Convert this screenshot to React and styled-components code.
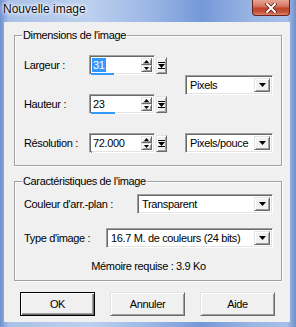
import React from 'react';
import styled, { createGlobalStyle } from 'styled-components';

const Global = createGlobalStyle`
  html, body { margin: 0; padding: 0; background: #fff; }
  body { font-family: "Liberation Sans", Arial, sans-serif; }
`;

const Window = styled.div`
  width: 296px;
  height: 327px;
  box-sizing: border-box;
  display: flex;
  flex-direction: column;
  background: linear-gradient(90deg, #6f8fd0 0%, #a9c1e8 3%, #bcd0ee 30%, #9db8e6 50%, #7498d8 68%, #9ab5e4 85%, #a7c0e9 97%, #6f8fc9 100%);
  overflow: hidden;
`;

const TitleBar = styled.div`
  height: 22px;
  flex: none;
  display: flex;
  align-items: flex-start;
  justify-content: space-between;
`;

const Title = styled.span`
  font-size: 12px;
  line-height: 18px;
  margin-left: 3px;
  color: #101010;
  text-shadow: 0 0 6px #fff, 0 0 4px #fff, 0 0 2px #fff;
`;

const CloseButton = styled.div`
  width: 38px;
  height: 16px;
  margin-right: 6px;
  box-sizing: border-box;
  border: 1px solid #6a231a;
  border-top: none;
  border-radius: 0 0 4px 4px;
  background: linear-gradient(180deg, #e6a595 0%, #d67a66 40%, #c2452d 55%, #c5523a 80%, #d98a6e 100%);
  display: flex;
  align-items: center;
  justify-content: center;
`;

const Client = styled.div`
  flex: 1;
  margin: 0 6px 5px 4px;
  background: #f0f0f0;
  display: flex;
  flex-direction: column;
  padding: 0 8px 0 10px;
  font-size: 11px;
  letter-spacing: -0.35px;
  color: #000;
`;

const Group = styled.div`
  position: relative;
  margin-top: ${p => p.$top}px;
  border: 1px solid #a0a0a0;
  box-shadow: inset 1px 1px 0 #fff, 1px 1px 0 #fff;
  padding: ${p => p.$pad};
`;

const GroupTitle = styled.span`
  position: absolute;
  top: -7px;
  left: 7px;
  padding: 0 1px;
  line-height: 13px;
  background: #f0f0f0;
`;

const DimGrid = styled.div`
  display: grid;
  grid-template-columns: 65px 78px 1fr 88px;
  grid-template-rows: 20px 20px 20px;
  row-gap: 19px;
  align-items: center;
`;

const Label = styled.span`
  line-height: 13px;
  white-space: nowrap;
  grid-column: 1;
  grid-row: ${p => p.$row || 'auto'};
`;

const SpinField = styled.div`
  display: flex;
  align-items: center;
  gap: 1px;
  grid-column: 2;
  grid-row: ${p => p.$row};
`;

const sunken = `
  box-sizing: border-box;
  background: #fff;
  border: 1px solid;
  border-color: #a0a0a0 #fff #fff #a0a0a0;
  box-shadow: inset 1px 1px 0 #696969, inset -1px -1px 0 #e3e3e3;
`;

const raised = `
  box-sizing: border-box;
  background: #f0f0f0;
  border: 1px solid;
  border-color: #e3e3e3 #696969 #696969 #e3e3e3;
  box-shadow: inset 1px 1px 0 #fff, inset -1px -1px 0 #a0a0a0;
`;

const EditBox = styled.div`
  ${sunken}
  position: relative;
  width: 66px;
  height: 20px;
  display: flex;
  align-items: stretch;
  padding: 2px 2px 2px 2px;
`;

const EditText = styled.div`
  flex: 1;
  display: flex;
  align-items: center;
  line-height: 14px;
  padding-left: 1px;
`;

const Selected = styled.span`
  background: #3399ff;
  color: #fff;
  padding: 0 1px;
  margin-left: -1px;
`;

const ValueBar = styled.div`
  position: absolute;
  left: 1px;
  bottom: -1px;
  height: 2px;
  background: #3399ff;
`;

const Spinner = styled.div`
  width: 11px;
  display: flex;
  flex-direction: column;
`;

const SpinBtn = styled.div`
  ${raised}
  flex: 1;
  display: flex;
  align-items: center;
  justify-content: center;
`;

const SliderBtn = styled.div`
  ${raised}
  width: 11px;
  height: 17px;
  display: flex;
  align-items: center;
  justify-content: center;
`;

const Combo = styled.div`
  ${sunken}
  width: ${p => p.$w}px;
  height: 20px;
  display: flex;
  align-items: stretch;
  padding: 2px;
  grid-column: ${p => p.$col || 'auto'};
  grid-row: ${p => p.$row || 'auto'};
  align-self: center;
`;

const ComboText = styled.div`
  flex: 1;
  display: flex;
  align-items: center;
  padding-left: 2px;
  white-space: nowrap;
  overflow: hidden;
`;

const DropBtn = styled.div`
  ${raised}
  width: 16px;
  display: flex;
  align-items: center;
  justify-content: center;
`;

const Row = styled.div`
  display: flex;
  align-items: center;
  justify-content: space-between;
  height: 20px;
  margin-top: ${p => p.$top || 0}px;
`;

const Memo = styled.div`
  margin-top: 12px;
  text-align: center;
  line-height: 13px;
`;

const ButtonRow = styled.div`
  display: flex;
  gap: 15px;
  margin-top: 11px;
  padding-left: 6px;
`;

const DialogButton = styled.div`
  ${raised}
  width: 75px;
  height: 24px;
  display: flex;
  align-items: center;
  justify-content: center;
  ${p => p.$default && `
    border: 1px solid #000;
    box-shadow: inset 1px 1px 0 #fff, inset -1px -1px 0 #696969, inset -2px -2px 0 #a0a0a0;
  `}
`;

const Up = () => (
  <svg width="5" height="3" viewBox="0 0 5 3"><path d="M2.5 0 L5 3 L0 3 Z" fill="#000" /></svg>
);
const Down = () => (
  <svg width="5" height="3" viewBox="0 0 5 3"><path d="M0 0 L5 0 L2.5 3 Z" fill="#000" /></svg>
);
const Tri = () => (
  <svg width="7" height="4" viewBox="0 0 7 4"><path d="M0 0 L7 0 L3.5 4 Z" fill="#000" /></svg>
);
const SliderGlyph = () => (
  <svg width="7" height="7" viewBox="0 0 7 7">
    <rect x="0" y="0" width="7" height="1" fill="#000" />
    <path d="M0 2 L7 2 L3.5 6 Z" fill="#000" />
    <rect x="0" y="6" width="7" height="1" fill="#000" />
  </svg>
);

const Spin = ({ children, bar, row }) => (
  <SpinField $row={row}>
    <EditBox>
      <EditText>{children}</EditText>
      <Spinner>
        <SpinBtn><Up /></SpinBtn>
        <SpinBtn><Down /></SpinBtn>
      </Spinner>
      <ValueBar style={{ width: bar + 'px' }} />
    </EditBox>
    <SliderBtn><SliderGlyph /></SliderBtn>
  </SpinField>
);

const Select = ({ w, children, col, row }) => (
  <Combo $w={w} $col={col} $row={row}>
    <ComboText>{children}</ComboText>
    <DropBtn><Tri /></DropBtn>
  </Combo>
);

export default function App() {
  return (
    <>
      <Global />
      <Window>
        <TitleBar>
          <Title>Nouvelle image</Title>
          <CloseButton>
            <svg width="12" height="10" viewBox="0 0 12 10">
              <path d="M2 1 L10 9 M10 1 L2 9" stroke="#5a1a10" strokeWidth="3.4" strokeLinecap="square" />
              <path d="M2 1 L10 9 M10 1 L2 9" stroke="#fff" strokeWidth="2" strokeLinecap="square" />
            </svg>
          </CloseButton>
        </TitleBar>
        <Client>
          <Group $top={13} $pad="19px 8px 12px 9px">
            <GroupTitle>Dimensions de l'image</GroupTitle>
            <DimGrid>
              <Label $row="1">Largeur :</Label>
              <Spin row="1" bar={23}><Selected>31</Selected></Spin>
              <Select w={88} col="4" row="1 / span 2">Pixels</Select>
              <Label $row="2">Hauteur :</Label>
              <Spin row="2" bar={24}>23</Spin>
              <Label $row="3">Résolution :</Label>
              <Spin row="3" bar={1}>72.000</Spin>
              <Select w={88} col="4" row="3">Pixels/pouce</Select>
            </DimGrid>
          </Group>
          <Group $top={15} $pad="12px 8px 7px 9px">
            <GroupTitle>Caractéristiques de l'image</GroupTitle>
            <Row>
              <Label>Couleur d'arr.-plan :</Label>
              <Select w={136}>Transparent</Select>
            </Row>
            <Row $top={14}>
              <Label>Type d'image :</Label>
              <Select w={167}>16.7 M. de couleurs (24 bits)</Select>
            </Row>
            <Memo>Mémoire requise : 3.9 Ko</Memo>
          </Group>
          <ButtonRow>
            <DialogButton $default>OK</DialogButton>
            <DialogButton>Annuler</DialogButton>
            <DialogButton>Aide</DialogButton>
          </ButtonRow>
        </Client>
      </Window>
    </>
  );
}
